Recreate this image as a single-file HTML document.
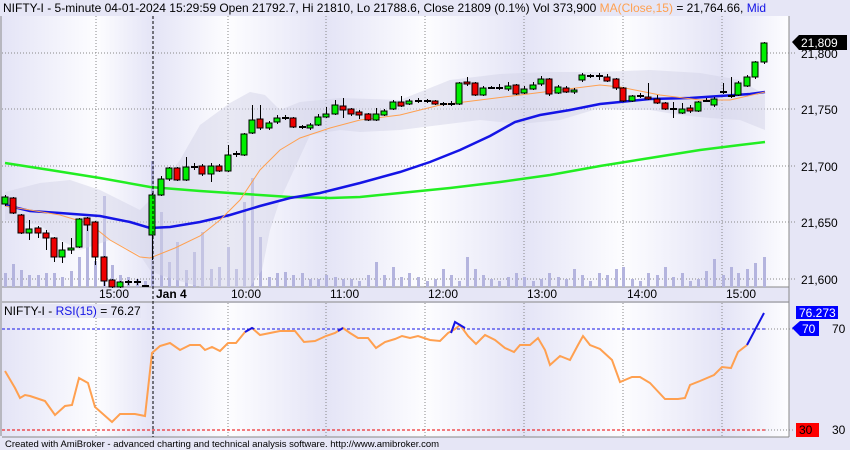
<!DOCTYPE html>
<html><head><meta charset="utf-8"><style>
html,body{margin:0;padding:0;width:850px;height:450px;overflow:hidden;background:#e6e6f6;font-family:"Liberation Sans",sans-serif}
svg{position:absolute;left:0;top:0}
</style></head><body>
<svg width="850" height="450" xmlns="http://www.w3.org/2000/svg" font-family="Liberation Sans, sans-serif">
<defs>
<linearGradient id="g" x1="0" x2="1" y1="0" y2="0"><stop offset="0" stop-color="#e4e4f6"/><stop offset="1" stop-color="#fdfdff"/></linearGradient>
<linearGradient id="g2" x1="0" x2="1" y1="0" y2="0"><stop offset="0" stop-color="#fdfdff"/><stop offset="1" stop-color="#e4e4f6"/></linearGradient>
</defs>
<rect x="0" y="0" width="850" height="450" fill="#e6e6f6"/>
<g id="bg"></g>
<line x1="1" y1="0" x2="1" y2="436" stroke="#888"/>
<line x1="789" y1="16" x2="789" y2="437" stroke="#888"/>
<line x1="2" y1="287" x2="789" y2="287" stroke="#888"/>
<line x1="2" y1="302" x2="789" y2="302" stroke="#888"/>
<line x1="2" y1="437" x2="789" y2="437" stroke="#888"/>
<g stroke="#888" stroke-dasharray="1,2" stroke-width="1">
<line x1="2" y1="53" x2="795" y2="53"/><line x1="2" y1="109" x2="795" y2="109"/><line x1="2" y1="166" x2="795" y2="166"/><line x1="2" y1="222" x2="795" y2="222"/><line x1="2" y1="279" x2="795" y2="279"/>
<line x1="96" y1="16" x2="96" y2="287"/><line x1="228" y1="16" x2="228" y2="287"/><line x1="326" y1="16" x2="326" y2="287"/><line x1="425" y1="16" x2="425" y2="287"/><line x1="524" y1="16" x2="524" y2="287"/><line x1="623" y1="16" x2="623" y2="287"/><line x1="722" y1="16" x2="722" y2="287"/>
<line x1="96" y1="303" x2="96" y2="437"/><line x1="228" y1="303" x2="228" y2="437"/><line x1="326" y1="303" x2="326" y2="437"/><line x1="425" y1="303" x2="425" y2="437"/><line x1="524" y1="303" x2="524" y2="437"/><line x1="623" y1="303" x2="623" y2="437"/><line x1="722" y1="303" x2="722" y2="437"/>
<line x1="765" y1="329" x2="795" y2="329"/><line x1="765" y1="430" x2="795" y2="430"/>
</g>
<g id="vol" fill="#b4b4de"></g>
<polygon fill="#d4d4e8" fill-opacity="0.5" points="5,192 40,183 70,180 100,190 140,210 150,200 180,160 200,125 230,103 250,92 265,95 280,110 300,102 340,98 400,100 450,80 500,74 550,72 600,72 650,70 700,73 740,80 765,95 765,130 740,120 710,118 680,115 650,110 620,110 600,108 560,120 520,124 480,120 440,125 400,130 360,132 340,130 310,135 280,200 270,230 262,270 250,287 200,287 160,275 150,270 140,255 110,240 80,250 60,240 40,225 5,220"/>
<polyline fill="none" stroke="#22ee22" stroke-width="2.5" points="5,163 50,170 100,178 150,187 200,191 245,194 290,197 330,198 360,197 400,193 450,188 500,182 550,175 600,166 650,158 700,150 740,145 765,142"/>
<polyline fill="none" stroke="#1414e6" stroke-width="2.5" points="5,205 30,211 60,213 100,216 130,222 150,228 170,227 200,222 230,215 260,206 290,198 320,193 360,183 400,172 430,162 460,150 490,136 515,122 540,115 570,110 600,104 620,102 650,99 690,98 720,96 750,94 765,92"/>
<polyline fill="none" stroke="#ffa050" stroke-width="1" points="5,206 30,210 60,215 90,224 110,240 140,257 150,258 175,248 200,236 220,220 240,200 260,170 280,150 300,138 330,128 360,120 400,115 440,105 480,100 520,95 560,90 600,85 620,87 660,95 700,100 730,100 765,92"/>
<g id="cdl"></g>
<line x1="153" y1="16" x2="153" y2="437" stroke="#000" stroke-dasharray="3,2"/>
<rect x="0" y="0" width="789" height="16" fill="#e6e6f6"/>
<text x="3" y="12" font-size="12" fill="#000">NIFTY-I - 5-minute 04-01-2024 15:29:59 Open 21792.7, Hi 21810, Lo 21788.6, Close 21809 (0.1%) Vol 373,900 <tspan fill="#ffa050">MA(Close,15)</tspan> = 21,764.66, <tspan fill="#1414e6">Mid</tspan></text>
<g font-size="12" fill="#000">
<text x="801" y="58">21,800</text><text x="801" y="114">21,750</text><text x="801" y="171">21,700</text><text x="801" y="227">21,650</text><text x="801" y="284">21,600</text>
</g>
<polygon points="792,42 799,35 847,35 847,50 799,50" fill="#000"/>
<text x="801" y="47" font-size="12" fill="#fff">21,809</text>
<g font-size="12" fill="#000">
<text x="99" y="298">15:00</text><text x="156" y="298" font-weight="bold">Jan 4</text><text x="231" y="298">10:00</text><text x="330" y="298">11:00</text><text x="428" y="298">12:00</text><text x="527" y="298">13:00</text><text x="627" y="298">14:00</text><text x="726" y="298">15:00</text>
</g>
<rect x="3" y="304" width="138" height="14" fill="#e6e6f6"/>
<text x="4" y="315" font-size="12" fill="#000">NIFTY-I - <tspan fill="#1414e6">RSI(15)</tspan> = 76.27</text>
<line x1="2" y1="329" x2="765" y2="329" stroke="#1414e6" stroke-dasharray="3,2"/>
<line x1="2" y1="430" x2="765" y2="430" stroke="#e00" stroke-dasharray="3,2"/>
<polyline fill="none" stroke="#ffa050" stroke-width="2" points="5,371 15,388 20,398 25,395 30,396 45,401 55,415 65,406 72,405 79,378 88,383 95,407 112,422 120,414 135,414 145,416 152,353 160,346 170,343 180,350 190,345 200,345 205,350 212,347 220,351 228,343 236,343 245,332 252,328 260,335 280,331 295,331 304,342 315,341 326,336 335,333 343,328 350,333 358,338 368,338 376,348 385,342 395,339 402,336 410,338 418,336 430,340 440,341 448,333 455,329 460,325 468,336 476,344 485,335 495,340 505,348 514,352 520,345 530,345 538,338 545,350 550,365 560,356 570,360 578,345 583,336 590,345 600,349 612,360 620,382 632,377 640,377 650,383 665,399 678,399 685,398 690,385 700,381 714,375 722,367 731,368 738,352 747,345"/>
<g fill="none" stroke="#1414e6" stroke-width="2">
<polyline points="245,332 252,328 254,329"/><polyline points="338,331 343,328"/><polyline points="451,333 455,322 460,325 465,328"/><polyline points="747,345 764,313"/>
</g>
<rect x="796" y="306" width="42" height="13" fill="#0000ff"/>
<text x="799" y="317" font-size="12" fill="#fff">76.273</text>
<polygon points="792,328 800,321 819,321 819,336 800,336" fill="#0000ff"/>
<text x="802" y="333" font-size="12" fill="#fff">70</text>
<text x="832" y="333" font-size="12" fill="#000">70</text>
<rect x="796" y="423" width="23" height="14" fill="#ff0000"/>
<text x="799" y="434" font-size="12" fill="#000">30</text>
<text x="832" y="434" font-size="12" fill="#000">30</text>
<text x="5" y="447" font-size="9.5" fill="#000">Created with AmiBroker - advanced charting and technical analysis software. http://www.amibroker.com</text>
</svg>
<script>
var NS="http://www.w3.org/2000/svg";
function el(p,t,a){var e=document.createElementNS(NS,t);for(var k in a)e.setAttribute(k,a[k]);document.getElementById(p).appendChild(e);}
var segs=[[2,96],[96,153],[153,228],[228,326],[326,425],[425,524],[524,623],[623,722],[722,789]];
segs.forEach(function(s,i){var f=(i%2==0)?"url(#g)":"url(#g2)";el("bg","rect",{x:s[0],y:16,width:s[1]-s[0],height:271,fill:f});el("bg","rect",{x:s[0],y:303,width:s[1]-s[0],height:134,fill:f});});
var c=[[5,197,204,1,195,206],[13,198,213,0,197,214],[21,215,233,0,214,234],[29,229,233,1,220,240],[38,228,233,0,226,238],[46,233,238,0,230,250],[54,238,257,0,237,262],[62,250,257,1,242,263],[71,248,250,1,238,254],[79,219,247,1,218,248],[87,218,225,0,217,231],[95,222,257,0,221,265],[104,257,281,0,256,286],[112,280,287,0,279,288],[120,282,287,1,281,288],[128,282,282,2,280,285],[137,282,282,2,279,285],[145,286,286,2,285,287],
[152,195,235,1,193,260],[161,179,195,1,176,196],[169,168,179,1,167,181],[177,168,180,0,167,181],[186,167,180,1,157,181],[194,167,167,2,163,170],[202,166,174,0,164,176],[211,166,174,1,163,182],[219,166,171,0,164,172],[228,155,171,1,145,172],[236,154,154,2,151,157],[244,134,155,1,133,156],[252,120,133,1,105,134],[260,119,128,0,105,130],[269,123,128,1,121,130],[277,118,122,1,115,124],[285,118,118,2,115,120],[293,118,127,0,117,128],[302,127,127,2,125,129],[310,125,128,1,123,130],[318,117,125,1,114,126],[326,114,117,1,107,118],[335,105,114,1,100,115],[343,106,110,0,98,118],[351,109,114,0,108,116],[359,112,115,0,110,119],[368,114,120,0,113,121],[376,114,120,1,108,121],[384,111,115,1,109,116],[393,102,109,1,100,110],[401,102,106,0,96,107],[409,101,104,1,99,105],[418,101,101,2,98,103],[427,101,101,2,99,103],[435,101,104,0,100,105],[443,104,104,2,102,106],[451,104,104,2,101,106],
[459,83,104,1,82,105],[467,82,84,0,77,86],[475,83,95,0,82,96],[483,88,95,1,86,96],[491,88,88,2,86,89],[499,88,88,2,84,90],[508,86,89,1,82,91],[516,85,94,0,84,95],[524,89,93,1,86,94],[533,85,89,1,82,90],[541,79,84,1,76,86],[549,79,94,0,78,96],[558,87,93,1,85,94],[566,88,92,0,86,93],[574,90,92,1,88,94],[582,75,80,1,73,82],[590,76,76,2,74,78],[599,76,76,2,73,80],[607,77,81,0,74,82],[616,79,88,0,78,90],[623,88,101,0,87,102],[632,96,101,1,95,102],[640,96,96,2,93,98],[648,97,99,0,83,100],[657,99,103,0,95,104],[665,103,109,0,102,110],[673,109,109,2,102,118],[682,109,113,1,103,114],[690,108,111,0,105,113],[698,102,111,1,101,112],[706,101,101,2,98,102],[714,99,105,1,97,107],[723,92,92,2,83,94],[731,96,96,2,77,98],[738,83,95,1,81,96],[747,77,86,1,75,87],[755,62,77,1,61,79],[764,43,62,1,42,64]];
c.forEach(function(d){var x=d[0];el("cdl","line",{x1:x+0.5,y1:d[4],x2:x+0.5,y2:d[5],stroke:"#000"});
if(d[3]==2){el("cdl","rect",{x:x-3,y:d[1]-1,width:7,height:2,fill:"#000"});}
else el("cdl","rect",{x:x-3,y:d[1],width:6,height:Math.max(2,d[2]-d[1]),fill:d[3]==1?"#00ee00":"#ee0000",stroke:"#000","stroke-width":1});});
var vh=[14,23,17,12,12,14,14,10,16,30,65,26,91,22,12,10,8,6,126,75,25,45,17,35,55,18,20,40,18,85,109,50,10,14,15,12,14,8,8,12,10,8,8,6,12,25,12,20,10,14,10,6,8,18,12,6,30,18,12,8,6,10,14,10,6,8,14,10,8,18,12,6,14,12,18,20,8,6,14,12,20,10,14,6,8,16,28,12,20,14,18,24,30,14,20,60,110];
c.forEach(function(d,i){var h=vh[i]||10;el("vol","rect",{x:d[0]-1,y:287-h,width:3,height:h});});
</script>
</body></html>
